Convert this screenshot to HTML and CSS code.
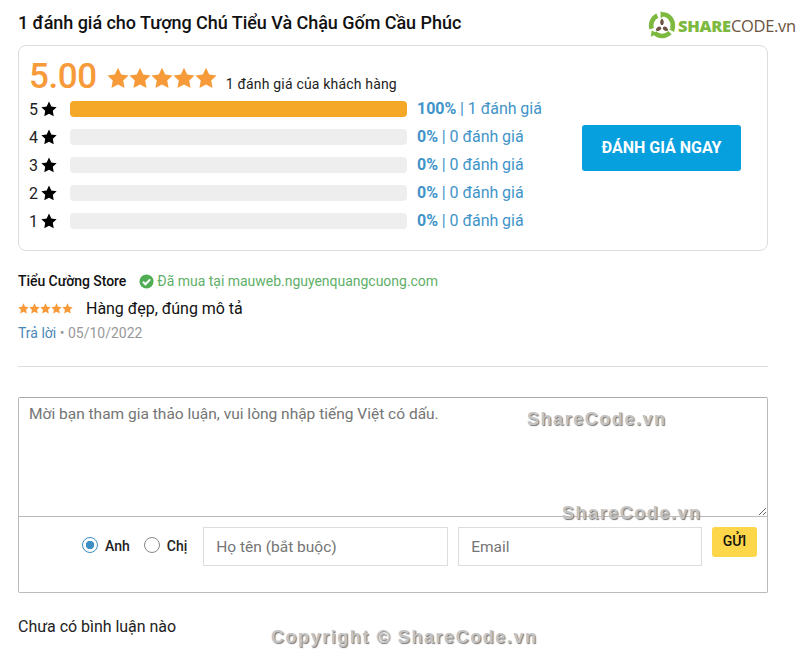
FILE: index.html
```html
<!DOCTYPE html>
<html lang="vi">
<head>
<meta charset="utf-8">
<title>Đánh giá</title>
<link rel="stylesheet" href="styles.css">
</head>
<body>
<svg width="0" height="0" class="defs"><defs><symbol id="star" viewBox="0 0 24 24"><path d="M12 .8l3.5 7.3 8 1.1-5.8 5.6 1.4 8-7.1-3.8-7.1 3.800 1.400-8L.5 9.200l8-1.100z"/></symbol></defs></svg>
<main class="page">
  <h2 class="title">1 đánh giá cho Tượng Chú Tiểu Và Chậu Gốm Cầu Phúc</h2>
  <section class="summary">
    <div class="summary-left">
      <div class="score-row">
        <span class="score">5.00</span>
        <span class="big-stars">
          <svg><use href="#star"/></svg><svg><use href="#star"/></svg><svg><use href="#star"/></svg><svg><use href="#star"/></svg><svg><use href="#star"/></svg>
        </span>
        <span class="score-note">1 đánh giá của khách hàng</span>
      </div>
      <div class="bar-row"><span class="num">5</span><svg class="row-star"><use href="#star"/></svg><span class="bar"><span class="fill"></span></span><span class="stat"><b>100%</b> | 1 đánh giá</span></div>
      <div class="bar-row"><span class="num">4</span><svg class="row-star"><use href="#star"/></svg><span class="bar"></span><span class="stat"><b>0%</b> | 0 đánh giá</span></div>
      <div class="bar-row"><span class="num">3</span><svg class="row-star"><use href="#star"/></svg><span class="bar"></span><span class="stat"><b>0%</b> | 0 đánh giá</span></div>
      <div class="bar-row"><span class="num">2</span><svg class="row-star"><use href="#star"/></svg><span class="bar"></span><span class="stat"><b>0%</b> | 0 đánh giá</span></div>
      <div class="bar-row"><span class="num">1</span><svg class="row-star"><use href="#star"/></svg><span class="bar"></span><span class="stat"><b>0%</b> | 0 đánh giá</span></div>
    </div>
    <a class="rate-btn">ĐÁNH GIÁ NGAY</a>
  </section>

  <article class="review">
    <div class="review-head">
      <strong class="author">Tiểu Cường Store</strong>
      <svg class="check" viewBox="0 0 16 16"><circle cx="8" cy="8" r="7.500" fill="#4fae54"/><path d="M4.200 8.200l2.700 2.700 5-5.200" fill="none" stroke="#fff" stroke-width="2.200"/></svg>
      <span class="bought">Đã mua tại mauweb.nguyenquangcuong.com</span>
    </div>
    <div class="review-body">
      <span class="mini-stars"><svg><use href="#star"/></svg><svg><use href="#star"/></svg><svg><use href="#star"/></svg><svg><use href="#star"/></svg><svg><use href="#star"/></svg></span>
      <span>Hàng đẹp, đúng mô tả</span>
    </div>
    <div class="review-meta"><a class="reply">Trả lời</a> <span class="dot">•</span> 05/10/2022</div>
  </article>

  <form class="comment">
    <textarea class="comment-input" placeholder="Mời bạn tham gia thảo luận, vui lòng nhập tiếng Việt có dấu."></textarea>
    <div class="comment-fields">
      <label class="radio"><span class="radio-mark on"></span>Anh</label>
      <label class="radio"><span class="radio-mark"></span>Chị</label>
      <input class="field" placeholder="Họ tên (bắt buộc)">
      <input class="field" placeholder="Email">
      <button class="send" type="button">GỬI</button>
    </div>
  </form>
  <p class="empty">Chưa có bình luận nào</p>
</main>

<div class="logo">
  <svg class="logo-mark" viewBox="0 0 30 30">
    <g fill="none" stroke="#7cb93e" stroke-width="5">
      <path d="M15.500 3.500A11.500 11.500 0 0 1 26 18.500"/>
      <path d="M23.500 23A11.500 11.500 0 0 1 7 23.500"/>
      <path d="M4 19A11.500 11.500 0 0 1 10 5"/>
    </g>
    <g fill="#7cb93e">
      <path d="M13.500 0l5 3.800-5 4.200z"/>
      <path d="M29 16l-1 6.500-5.500-3z"/>
      <path d="M3 27.500l1-7 6 3.500z"/>
    </g>
    <path d="M15 8c2.200 2.200 2.500 4.600 1 7h-2c-1.500-2.400-1.200-4.800 1-7zM8.300 21c.6-3.100 2.400-4.600 5-4.200l1 1.800c-1 2.500-3.200 3.500-6 2.400zM21.700 21c-2.800 1.100-5 .1-6-2.400l1-1.800c2.600-.4 4.400 1.100 5 4.200z" fill="#6b5340"/>
  </svg>
  <span class="logo-text"><b>SHARE</b>CODE.vn</span>
</div>
<div class="mark mark-a">ShareCode.vn</div>
<div class="mark mark-b">ShareCode.vn</div>
<div class="mark mark-c">Copyright © ShareCode.vn</div>
</body>
</html>
```

FILE: styles.css
```css
* { box-sizing: border-box; }
html, body { margin: 0; padding: 0; }
body {
  position: relative;
  height: 670px;
  overflow: hidden;
  background: #fff;
  color: #111;
  font-family: Roboto, "Noto Sans", sans-serif;
  font-size: 16px;
}
.defs { position: absolute; }
.page { width: 750px; margin-left: 18px; padding-top: 11px; }

.title { margin: 0 0 11px; font-size: 18px; line-height: 23px; font-weight: 500; letter-spacing: -0.04px; color: #111; }

.summary {
  display: flex;
  align-items: flex-start;
  justify-content: space-between;
  height: 206px;
  padding: 10px 26px 0 10px;
  border: 1px solid #ddd;
  border-radius: 8px;
}
.score-row { display: flex; align-items: flex-start; height: 38px; margin-bottom: 1px; }
.score { font-size: 35px; line-height: 42px; font-weight: 500; letter-spacing: -0.4px; color: #f79a3a; }
.big-stars { display: flex; margin: 11px 9px 0 10px; fill: #f79a3a; }
.big-stars svg { width: 22px; height: 22px; }
.score-note { margin-top: 19px; font-size: 14px; line-height: 18px; letter-spacing: 0.18px; color: #222; }

.bar-row { display: flex; align-items: center; height: 28px; }
.num { width: 12px; font-size: 16px; color: #222; }
.row-star { width: 16px; height: 16px; fill: #000; margin-right: 13px; }
.bar {
  display: block;
  width: 337px;
  height: 16px;
  margin-right: 10px;
  border-radius: 4px;
  background: #eee;
  overflow: hidden;
}
.fill { display: block; height: 100%; background: #f5a727; }
.stat { padding-bottom: 2px; font-size: 16px; letter-spacing: -0.05px; color: #3f94c9; white-space: nowrap; }
.stat b { font-weight: 700; color: #3f94c9; }

.rate-btn {
  display: flex;
  align-items: center;
  justify-content: center;
  width: 159px;
  height: 46px;
  margin-top: 69px;
  padding-bottom: 2px;
  border-radius: 3px;
  background: #07a0de;
  color: #fff;
  font-size: 16px;
  font-weight: 700;
}

.review { height: 95px; margin-top: 21px; border-bottom: 1px solid #ddd; }
.review-head { display: flex; align-items: center; height: 18px; }
.author { font-size: 14px; font-weight: 500; letter-spacing: -0.05px; color: #111; }
.check { width: 15px; height: 15px; margin: 0 3px 0 13px; }
.bought { font-size: 14px; letter-spacing: -0.02px; color: #5fb068; }
.review-body { display: flex; align-items: center; height: 20px; margin-top: 8px; font-size: 16px; letter-spacing: -0.03px; color: #111; }
.mini-stars { display: flex; margin-right: 13px; fill: #f79a3a; }
.mini-stars svg { width: 11px; height: 11px; }
.review-meta { margin-top: 6px; font-size: 14px; line-height: 18px; color: #999; }
.reply { color: #4a87b8; }
.dot { font-size: 14px; }

.comment {
  height: 196px;
  margin-top: 30px;
  border: 1px solid #bbb;
  border-top-color: #aaa;
  border-radius: 2px;
}
.comment-input {
  display: block;
  width: 100%;
  height: 119px;
  padding: 7px 10px;
  border: 0;
  border-bottom: 1px solid #bbb;
  outline: 0;
  resize: vertical;
  font-family: Roboto, sans-serif;
  font-size: 15.500px;
  line-height: 19px;
  color: #333;
  background: #fff;
}
.comment-input::placeholder, .field::placeholder { color: #757575; opacity: 1; }
.comment-fields { display: flex; align-items: flex-start; padding: 10px 10px 0 63px; }
.radio {
  display: flex;
  align-items: center;
  height: 38px;
  margin-right: 14px;
  font-size: 14px;
  font-weight: 500;
  color: #222;
}
.radio:nth-child(2) { margin-right: 16px; }
.radio-mark {
  width: 16px;
  height: 16px;
  margin: -3px 7px 0 0;
  border: 1px solid #888;
  border-radius: 50%;
  background: #fff;
}
.radio-mark.on {
  border-color: #3d8fc4;
  background: radial-gradient(circle, #3d8fc4 0 4px, #fff 4.500px);
}
.field {
  width: 245px;
  height: 39px;
  padding: 0 12px;
  border: 1px solid #ddd;
  outline: 0;
  font-family: Roboto, sans-serif;
  font-size: 15.500px;
  color: #333;
}
.field + .field { width: 244px; margin-left: 10px; }
.send {
  width: 45px;
  height: 30px;
  margin-left: 10px;
  padding: 0 0 3px;
  border: 0;
  border-radius: 3px;
  background: #fdd64a;
  color: #111;
  font-family: Roboto, sans-serif;
  font-size: 14px;
  font-weight: 500;
}
.empty { margin: 24px 0 0; font-size: 16px; line-height: 20px; letter-spacing: -0.03px; color: #222; }

.logo { position: absolute; left: 648px; top: 11px; display: flex; align-items: center; gap: 2px; }
.logo-mark { width: 28px; height: 28px; }
.logo-text { font-family: "Open Sans", Lato, sans-serif; font-size: 16.500px; color: #6b5340; letter-spacing: -0.3px; }
.logo-text b { color: #7cb93e; font-weight: 800; }

.mark {
  position: absolute;
  font-family: "Liberation Sans", Arial, sans-serif;
  font-size: 18px;
  font-weight: 700;
  color: #c4c4c4;
  text-shadow: 1px 1px 1px #777;
  white-space: nowrap;
  pointer-events: none;
  letter-spacing: 1.55px;
}
.mark-a { left: 527px; top: 409px; }
.mark-b { left: 562px; top: 503px; }
.mark-c { left: 271px; top: 627px; }
```
